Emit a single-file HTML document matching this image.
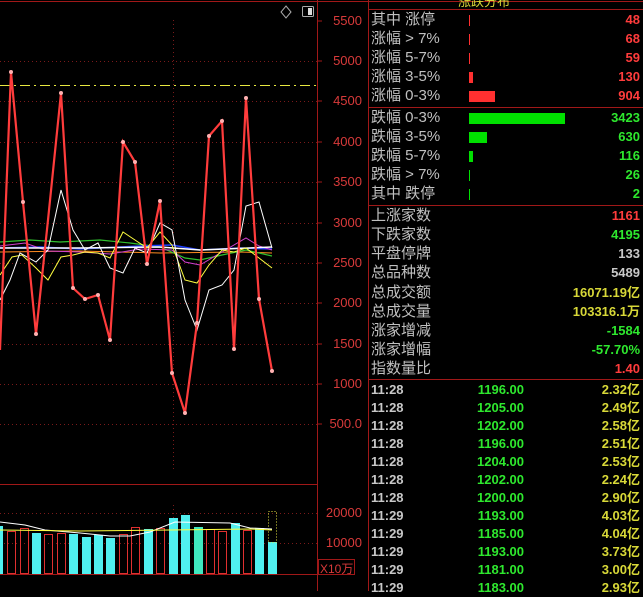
<!DOCTYPE html>
<html><head><meta charset="utf-8"><style>
html,body{margin:0;padding:0;background:#000;width:643px;height:591px;overflow:hidden;font-family:"Liberation Sans","Noto Sans CJK SC",sans-serif}
.a{position:absolute;white-space:nowrap}
.lab{color:#c0c0c0;font-size:15px;line-height:19px;left:371px}
.val{font-size:13px;font-weight:bold;line-height:19px;right:3px;text-align:right}
.r{color:#ff3c3c}.g{color:#2ee82e}.w{color:#c8c8c8}.y{color:#d8d838}
.ax{color:#d83a3a;font-size:13px;right:281px;text-align:right}
.row{position:absolute;left:0;width:643px;height:18px;font-size:13px;font-weight:bold;line-height:18px}
.row span{position:absolute;white-space:nowrap}
.c1{left:371px;color:#c8c8c8}.c2{right:119px;color:#2ee82e}.c3{right:3px;color:#d8d838}
</style></head><body>
<svg class="a" style="left:0;top:0" width="643" height="591">
<line x1="0" y1="1.5" x2="643" y2="1.5" stroke="#a01818"/>
<line x1="317.5" y1="0" x2="317.5" y2="591" stroke="#a01818"/>
<line x1="368.5" y1="0" x2="368.5" y2="591" stroke="#a01818"/>
<line x1="369" y1="9.5" x2="643" y2="9.5" stroke="#a01818"/>
<line x1="369" y1="107.5" x2="643" y2="107.5" stroke="#a01818"/>
<line x1="369" y1="205.5" x2="643" y2="205.5" stroke="#a01818"/>
<line x1="369" y1="379.5" x2="643" y2="379.5" stroke="#a01818"/>
<line x1="0" y1="484.5" x2="317" y2="484.5" stroke="#a01818"/>
<line x1="0" y1="574.5" x2="317" y2="574.5" stroke="#a01818"/>
<g stroke="#7a1a1a" stroke-dasharray="1,3">
<line x1="0" y1="61.5" x2="317" y2="61.5"/><line x1="0" y1="101.5" x2="317" y2="101.5"/>
<line x1="0" y1="142.5" x2="317" y2="142.5"/><line x1="0" y1="182.5" x2="317" y2="182.5"/>
<line x1="0" y1="223.5" x2="317" y2="223.5"/><line x1="0" y1="263.5" x2="317" y2="263.5"/>
<line x1="0" y1="303.5" x2="317" y2="303.5"/><line x1="0" y1="344.5" x2="317" y2="344.5"/>
<line x1="0" y1="384.5" x2="317" y2="384.5"/><line x1="0" y1="424.5" x2="317" y2="424.5"/>
<line x1="0" y1="513.5" x2="317" y2="513.5"/><line x1="0" y1="543.5" x2="317" y2="543.5"/>
<line x1="173.5" y1="20" x2="173.5" y2="470"/><line x1="173.5" y1="505" x2="173.5" y2="574"/>
</g>
<g stroke="#a01818"><line x1="317" y1="21" x2="322" y2="21"/><line x1="317" y1="61" x2="322" y2="61"/><line x1="317" y1="101" x2="322" y2="101"/><line x1="317" y1="142" x2="322" y2="142"/><line x1="317" y1="182" x2="322" y2="182"/><line x1="317" y1="223" x2="322" y2="223"/><line x1="317" y1="263" x2="322" y2="263"/><line x1="317" y1="303" x2="322" y2="303"/><line x1="317" y1="344" x2="322" y2="344"/><line x1="317" y1="384" x2="322" y2="384"/><line x1="317" y1="424" x2="322" y2="424"/></g>
<line x1="0" y1="85.5" x2="317" y2="85.5" stroke="#e8e840" stroke-dasharray="10,4,2,4"/>
<path d="M286 6 L291 12 L286 18 L281 12Z" fill="none" stroke="#aaa"/>
<rect x="302.5" y="6.5" width="11" height="10" fill="none" stroke="#aaa" rx="1"/><rect x="308" y="8" width="4" height="7" fill="#ddd"/>
<polyline fill="none" stroke="#ff8c20" points="0,252 80,251 160,253 240,252 272,253"/>
<polyline fill="none" stroke="#30c030" stroke-width="1.2" points="0,242 30,240 60,242 100,240 130,243 160,247 185,258 200,260 222,255 246,250 272,256"/>
<polyline fill="none" stroke="#2040ff" stroke-width="1.5" points="0,248 40,247 80,249 140,246 172,245 200,250 240,248 272,249"/>
<polyline fill="none" stroke="#d040d0" points="0,246 25,243 48,251 80,252 110,254 140,249 172,250 185,262 200,265 222,252 246,238 259,246 272,250"/>
<polyline fill="none" stroke="#ffffff" stroke-width="1.5" points="0,248 80,248 160,247 200,250 272,247"/>
<polyline fill="none" stroke="#ffff40" points="0,275 12,257 22,255 36,268 48,280 61,257 73,255 85,252 98,253 110,258 123,232 135,240 147,248 160,232 172,245 185,280 197,283 209,265 222,250 234,252 246,248 259,258 272,268"/>
<polyline fill="none" stroke="#ffffff" points="0,300 10,280 20,253 36,262 48,250 61,190 73,230 85,250 98,243 110,268 123,273 135,248 147,253 160,223 172,230 185,300 197,330 209,290 222,285 234,270 246,206 259,202 272,248"/>
<polyline fill="none" stroke="#ff3c3c" stroke-width="2.2" points="0,350 11,72 23,202 36,334 48,220 61,93 73,288 85,299 98,295 110,340 123,142 135,162 147,264 160,201 172,373 185,413 197,323 209,136 222,121 234,349 246,98 259,299 272,371"/>
<g fill="#ffb0b0"><circle cx="11" cy="72" r="2"/><circle cx="23" cy="202" r="2"/><circle cx="36" cy="334" r="2"/><circle cx="61" cy="93" r="2"/><circle cx="73" cy="288" r="2"/><circle cx="85" cy="299" r="2"/><circle cx="98" cy="295" r="2"/><circle cx="110" cy="340" r="2"/><circle cx="123" cy="142" r="2"/><circle cx="135" cy="162" r="2"/><circle cx="147" cy="264" r="2"/><circle cx="160" cy="201" r="2"/><circle cx="172" cy="373" r="2"/><circle cx="185" cy="413" r="2"/><circle cx="197" cy="323" r="2"/><circle cx="209" cy="136" r="2"/><circle cx="222" cy="121" r="2"/><circle cx="234" cy="349" r="2"/><circle cx="246" cy="98" r="2"/><circle cx="259" cy="299" r="2"/><circle cx="272" cy="371" r="2"/></g>
<g fill="#50f0f0">
<rect x="0" y="526" width="3" height="48"/><rect x="32" y="533" width="9" height="41"/><rect x="69" y="534" width="9" height="40"/><rect x="82" y="537" width="9" height="37"/><rect x="94" y="535" width="9" height="39"/><rect x="106" y="538" width="9" height="36"/><rect x="144" y="529" width="9" height="45"/><rect x="169" y="518" width="9" height="56"/><rect x="181" y="515" width="9" height="59"/><rect x="194" y="527" width="9" height="47" fill="#40e8c0"/><rect x="231" y="523" width="9" height="51"/><rect x="255" y="528" width="9" height="46"/><rect x="268" y="542" width="9" height="32"/></g>
<g fill="none" stroke="#e03030"><rect x="7.5" y="531.5" width="8" height="42"/><rect x="20.5" y="528.5" width="8" height="45"/><rect x="44.5" y="534.5" width="8" height="39"/><rect x="57.5" y="533.5" width="8" height="40"/><rect x="119.5" y="534.5" width="8" height="39"/><rect x="131.5" y="527.5" width="8" height="46"/><rect x="156.5" y="528.5" width="8" height="45"/><rect x="206.5" y="529.5" width="8" height="44"/><rect x="218.5" y="531.5" width="8" height="42"/><rect x="243.5" y="530.5" width="8" height="43"/></g>
<rect x="268.5" y="511.5" width="8" height="31" fill="none" stroke="#e0e040" stroke-dasharray="1,2"/>
<polyline fill="none" stroke="#fff" points="0,522 25,525 45,530 80,533 110,536 130,536 150,532 175,522 230,523 250,528 272,529"/>
<polyline fill="none" stroke="#ffff40" points="0,530 80,531 170,530 250,529 272,530"/>
<rect x="318.5" y="559.5" width="36" height="15" fill="none" stroke="#a01818"/>
<g fill="#ff3030"><rect x="469" y="15" width="1" height="11"/><rect x="469" y="34" width="1" height="11"/><rect x="469" y="53" width="1" height="11"/><rect x="469" y="72" width="4" height="11"/><rect x="469" y="91" width="26" height="11"/></g>
<g fill="#00e000"><rect x="469" y="113" width="96" height="11"/><rect x="469" y="132" width="18" height="11"/><rect x="469" y="151" width="4" height="11"/><rect x="469" y="170" width="1" height="11"/><rect x="469" y="189" width="1" height="11"/></g>
</svg>
<div class="a ax" style="top:13px">5500</div><div class="a ax" style="top:53px">5000</div><div class="a ax" style="top:93px">4500</div><div class="a ax" style="top:134px">4000</div><div class="a ax" style="top:174px">3500</div><div class="a ax" style="top:215px">3000</div><div class="a ax" style="top:255px">2500</div><div class="a ax" style="top:295px">2000</div><div class="a ax" style="top:336px">1500</div><div class="a ax" style="top:376px">1000</div><div class="a ax" style="top:416px">500.0</div>
<div class="a ax" style="top:505px">20000</div><div class="a ax" style="top:535px">10000</div>
<div class="a" style="left:320px;top:560px;color:#d83a3a;font-size:12px">X10万</div>
<div class="a" style="left:458px;top:-9px;color:#d8d838;font-size:13px">涨跌分布</div>
<div class="a lab" style="top:10px">其中 涨停</div><div class="a val r" style="top:10px">48</div>
<div class="a lab" style="top:29px">涨幅 &gt; 7%</div><div class="a val r" style="top:29px">68</div>
<div class="a lab" style="top:48px">涨幅 5-7%</div><div class="a val r" style="top:48px">59</div>
<div class="a lab" style="top:67px">涨幅 3-5%</div><div class="a val r" style="top:67px">130</div>
<div class="a lab" style="top:86px">涨幅 0-3%</div><div class="a val r" style="top:86px">904</div>
<div class="a lab" style="top:108px">跌幅 0-3%</div><div class="a val g" style="top:108px">3423</div>
<div class="a lab" style="top:127px">跌幅 3-5%</div><div class="a val g" style="top:127px">630</div>
<div class="a lab" style="top:146px">跌幅 5-7%</div><div class="a val g" style="top:146px">116</div>
<div class="a lab" style="top:165px">跌幅 &gt; 7%</div><div class="a val g" style="top:165px">26</div>
<div class="a lab" style="top:184px">其中 跌停</div><div class="a val g" style="top:184px">2</div>
<div class="a lab" style="top:206px">上涨家数</div><div class="a val r" style="top:206px">1161</div>
<div class="a lab" style="top:225px">下跌家数</div><div class="a val g" style="top:225px">4195</div>
<div class="a lab" style="top:244px">平盘停牌</div><div class="a val w" style="top:244px">133</div>
<div class="a lab" style="top:263px">总品种数</div><div class="a val w" style="top:263px">5489</div>
<div class="a lab" style="top:283px">总成交额</div><div class="a val y" style="top:283px">16071.19亿</div>
<div class="a lab" style="top:302px">总成交量</div><div class="a val y" style="top:302px">103316.1万</div>
<div class="a lab" style="top:321px">涨家增减</div><div class="a val g" style="top:321px">-1584</div>
<div class="a lab" style="top:340px">涨家增幅</div><div class="a val g" style="top:340px">-57.70%</div>
<div class="a lab" style="top:359px">指数量比</div><div class="a val r" style="top:359px">1.40</div>
<div class="row" style="top:381px"><span class="c1">11:28</span><span class="c2">1196.00</span><span class="c3">2.32亿</span></div>
<div class="row" style="top:399px"><span class="c1">11:28</span><span class="c2">1205.00</span><span class="c3">2.49亿</span></div>
<div class="row" style="top:417px"><span class="c1">11:28</span><span class="c2">1202.00</span><span class="c3">2.58亿</span></div>
<div class="row" style="top:435px"><span class="c1">11:28</span><span class="c2">1196.00</span><span class="c3">2.51亿</span></div>
<div class="row" style="top:453px"><span class="c1">11:28</span><span class="c2">1204.00</span><span class="c3">2.53亿</span></div>
<div class="row" style="top:471px"><span class="c1">11:28</span><span class="c2">1202.00</span><span class="c3">2.24亿</span></div>
<div class="row" style="top:489px"><span class="c1">11:28</span><span class="c2">1200.00</span><span class="c3">2.90亿</span></div>
<div class="row" style="top:507px"><span class="c1">11:29</span><span class="c2">1193.00</span><span class="c3">4.03亿</span></div>
<div class="row" style="top:525px"><span class="c1">11:29</span><span class="c2">1185.00</span><span class="c3">4.04亿</span></div>
<div class="row" style="top:543px"><span class="c1">11:29</span><span class="c2">1193.00</span><span class="c3">3.73亿</span></div>
<div class="row" style="top:561px"><span class="c1">11:29</span><span class="c2">1181.00</span><span class="c3">3.00亿</span></div>
<div class="row" style="top:579px"><span class="c1">11:29</span><span class="c2">1183.00</span><span class="c3">2.93亿</span></div>
</body></html>
